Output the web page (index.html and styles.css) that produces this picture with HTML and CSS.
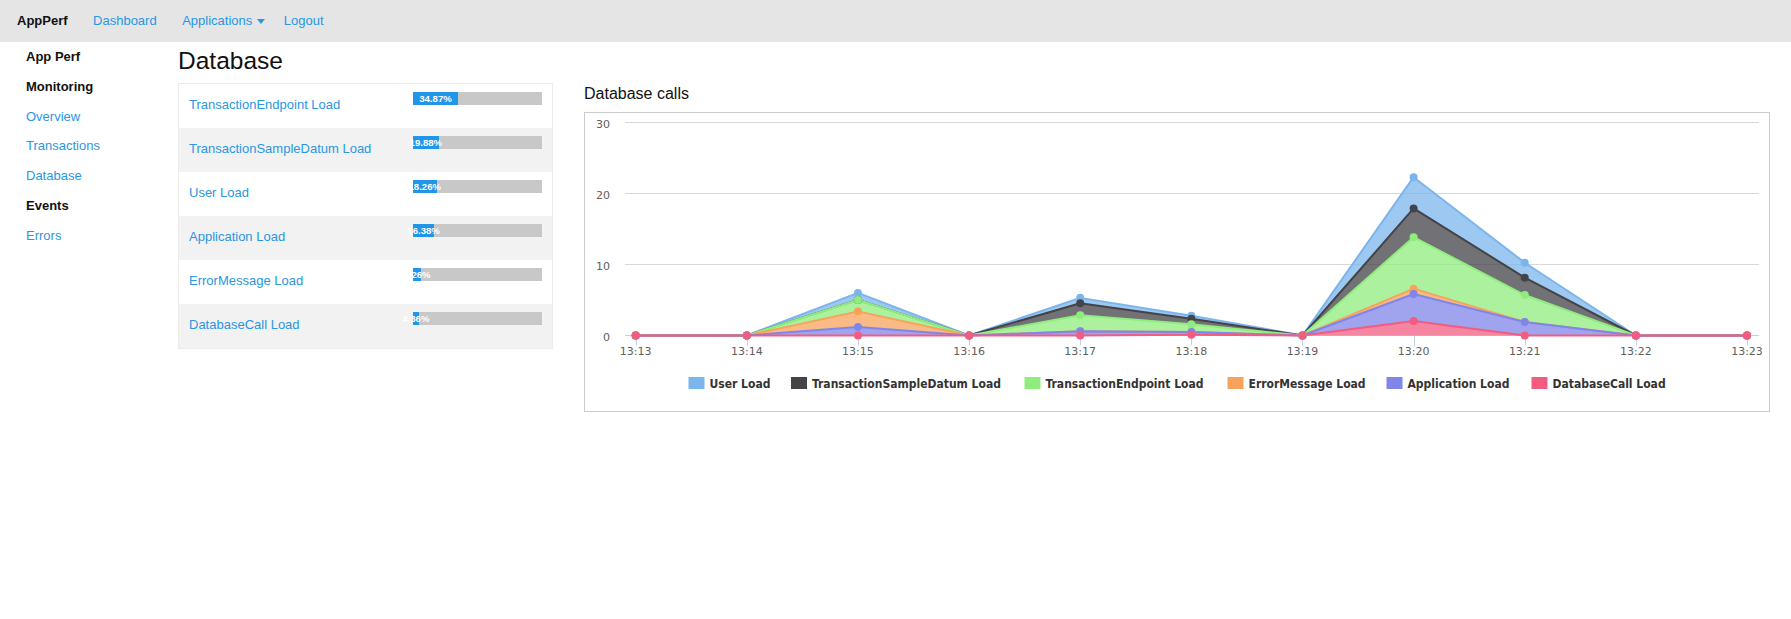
FILE: index.html
```html
<!DOCTYPE html>
<html lang="en">
<head>
<meta charset="utf-8">
<title>AppPerf - Database</title>
<link rel="stylesheet" href="styles.css">
</head>
<body>
<nav class="topbar">
  <a class="brand" href="#">AppPerf</a>
  <a class="nav-link" href="#">Dashboard</a>
  <a class="nav-link dropdown" href="#">Applications<span class="caret"></span></a>
  <a class="nav-link" href="#">Logout</a>
</nav>
<div class="layout">
  <aside class="sidebar">
    <div class="side-head">App Perf</div>
    <div class="side-head">Monitoring</div>
    <a class="side-link" href="#">Overview</a>
    <a class="side-link" href="#">Transactions</a>
    <a class="side-link" href="#">Database</a>
    <div class="side-head">Events</div>
    <a class="side-link" href="#">Errors</a>
  </aside>
  <main class="content">
    <h1 class="page-title">Database</h1>
    <div class="panels">
      <div class="load-table">
        <div class="load-row"><a class="load-name" href="#">TransactionEndpoint Load</a><div class="track"><div class="fill" style="width:34.87%"><span>34.87%</span></div></div></div>
        <div class="load-row"><a class="load-name" href="#">TransactionSampleDatum Load</a><div class="track"><div class="fill" style="width:19.88%"><span>19.88%</span></div></div></div>
        <div class="load-row"><a class="load-name" href="#">User Load</a><div class="track"><div class="fill" style="width:18.26%"><span>18.26%</span></div></div></div>
        <div class="load-row"><a class="load-name" href="#">Application Load</a><div class="track"><div class="fill" style="width:16.38%"><span>16.38%</span></div></div></div>
        <div class="load-row"><a class="load-name" href="#">ErrorMessage Load</a><div class="track"><div class="fill" style="width:6.26%"><span>6.26%</span></div></div></div>
        <div class="load-row"><a class="load-name" href="#">DatabaseCall Load</a><div class="track"><div class="fill" style="width:4.36%"><span>4.36%</span></div></div></div>
      </div>
      <section class="chart-panel">
        <h2 class="chart-title">Database calls</h2>
        <div class="chart-box">
          <svg id="chart" xmlns="http://www.w3.org/2000/svg" width="1184" height="298" viewBox="0 0 1184 298"></svg>
        </div>
      </section>
    </div>
  </main>
</div>
<script src="script.js"></script>
</body>
</html>
```

FILE: styles.css
```css
* { box-sizing: border-box; }

body {
  margin: 0;
  font-family: "Liberation Sans", Arial, sans-serif;
  font-size: 13px;
  color: #111;
  background: #fff;
}

a { color: #2a96e2; text-decoration: none; }

.topbar {
  display: flex;
  align-items: center;
  gap: 25.5px;
  height: 42px;
  padding: 0 0 2px 17px;
  background: #e5e5e5;
}

.brand { font-weight: bold; color: #111; }

.caret {
  display: inline-block;
  width: 0;
  height: 0;
  border-left: 4.7px solid transparent;
  border-right: 4.7px solid transparent;
  border-top: 5px solid currentColor;
  vertical-align: middle;
  margin-left: 4.5px;
  margin-right: -6.5px;
}

.layout { display: flex; align-items: flex-start; }

.sidebar {
  flex: none;
  width: 178px;
  padding-left: 26px;
  display: flex;
  flex-direction: column;
  align-items: flex-start;
}

.side-head, .side-link { line-height: 29.83px; }
.side-head { font-weight: bold; color: #111; }

.content { flex: 1; min-width: 0; padding-right: 21px; }

.page-title {
  margin: 3px 0 0;
  font-size: 24.5px;
  font-weight: normal;
  line-height: 31px;
  color: #111;
}

.panels {
  display: flex;
  align-items: flex-start;
  gap: 31px;
  margin-top: 7px;
}

.load-table {
  flex: none;
  width: 375px;
  border: 1px solid #ececec;
}

.load-row {
  display: flex;
  justify-content: space-between;
  height: 44px;
  padding: 0 10px;
}
.load-row:nth-child(even) { background: #f2f2f2; }

.load-name { line-height: 41px; }

.track {
  width: 129px;
  height: 13px;
  margin-top: 8px;
  background: #c8c8c8;
}

.fill {
  height: 13px;
  background: #2196e8;
  display: flex;
  justify-content: center;
  color: #fff;
  font-size: 9.6px;
  font-weight: bold;
  line-height: 13px;
  white-space: nowrap;
}

.chart-panel { flex: 1; min-width: 0; }

.chart-title {
  margin: 1px 0 8px;
  font-size: 16px;
  font-weight: normal;
  line-height: 20px;
  color: #111;
}

.chart-box { border: 1px solid #ccc; height: 300px; }
.chart-box svg { display: block; }

.axis-label {
  font-family: "DejaVu Sans", sans-serif;
  font-size: 11px;
  fill: #606060;
}

.legend-label {
  font-family: "DejaVu Sans Condensed", "DejaVu Sans", sans-serif;
  font-stretch: condensed;
  font-weight: bold;
  font-size: 12px;
  fill: #333;
}
```

FILE: script.js
```js
(function () {
  var NS = 'http://www.w3.org/2000/svg';
  var svg = document.getElementById('chart');

  var cats = ['13:13', '13:14', '13:15', '13:16', '13:17', '13:18', '13:19', '13:20', '13:21', '13:22', '13:23'];
  // stacked tops, series order as in legend (top of stack first)
  var series = [
    { name: 'User Load', color: '#7cb5ec', top: [0, 0, 6.0, 0, 5.3, 2.78, 0, 22.3, 10.25, 0, 0] },
    { name: 'TransactionSampleDatum Load', color: '#434348', top: [0, 0, 5.0, 0, 4.55, 2.35, 0, 17.9, 8.15, 0, 0] },
    { name: 'TransactionEndpoint Load', color: '#90ed7d', top: [0, 0, 5.0, 0, 2.85, 1.6, 0, 13.85, 5.7, 0, 0] },
    { name: 'ErrorMessage Load', color: '#f7a35c', top: [0, 0, 3.4, 0, 0.6, 0.5, 0, 6.6, 1.9, 0, 0] },
    { name: 'Application Load', color: '#8085e9', top: [0, 0, 1.2, 0, 0.6, 0.5, 0, 5.85, 1.9, 0, 0] },
    { name: 'DatabaseCall Load', color: '#f15c80', top: [0, 0, 0, 0, 0, 0.1, 0, 2.05, 0, 0, 0] }
  ];
  var legendX = [103.5, 206, 439.5, 642.5, 801.5, 946.5];

  var plotLeft = 40, plotRight = 1174;
  var y0 = 222.5, unit = 7.1;
  var x0 = 50.7, dx = 111.13;

  function el(name, attrs, text) {
    var e = document.createElementNS(NS, name);
    for (var k in attrs) e.setAttribute(k, attrs[k]);
    if (text !== undefined) e.textContent = text;
    svg.appendChild(e);
    return e;
  }
  function X(i) { return x0 + dx * i; }
  function Y(v) { return y0 - v * unit; }

  // grid lines + y labels
  for (var k = 0; k <= 3; k++) {
    var gy = y0 - k * 10 * unit;
    el('line', { x1: plotLeft, x2: plotRight, y1: gy, y2: gy, stroke: '#d8d8d8', 'stroke-width': 1 });
    el('text', { x: 25, y: gy + 5, 'text-anchor': 'end', 'class': 'axis-label' }, String(k * 10));
  }
  // x axis line, ticks, labels
  el('line', { x1: plotLeft, x2: plotRight, y1: y0, y2: y0, stroke: '#c0d0e0', 'stroke-width': 1 });
  cats.forEach(function (c, i) {
    var tx = Math.round(X(i)) + 0.5;
    el('line', { x1: tx, x2: tx, y1: y0, y2: y0 + 10, stroke: '#c0d0e0', 'stroke-width': 1 });
    el('text', { x: X(i), y: 242, 'text-anchor': 'middle', 'class': 'axis-label' }, c);
  });

  // series
  series.forEach(function (s, si) {
    var below = si < series.length - 1 ? series[si + 1].top : null;
    var pts = s.top.map(function (v, i) { return X(i).toFixed(2) + ',' + Y(v).toFixed(2); });
    var bottom = s.top.map(function (v, i) { return X(i).toFixed(2) + ',' + Y(below ? below[i] : 0).toFixed(2); }).reverse();
    el('polygon', { points: pts.concat(bottom).join(' '), fill: s.color, 'fill-opacity': 0.75 });
    el('polyline', { points: pts.join(' '), fill: 'none', stroke: s.color, 'stroke-width': 2, 'stroke-linejoin': 'round' });
  });
  series.forEach(function (s) {
    s.top.forEach(function (v, i) {
      el('circle', { cx: X(i), cy: Y(v), r: 4, fill: s.color });
    });
  });

  // legend
  series.forEach(function (s, si) {
    el('rect', { x: legendX[si], y: 264, width: 16, height: 12, fill: s.color });
    el('text', { x: legendX[si] + 21, y: 275.3, 'class': 'legend-label' }, s.name);
  });
})();
```
